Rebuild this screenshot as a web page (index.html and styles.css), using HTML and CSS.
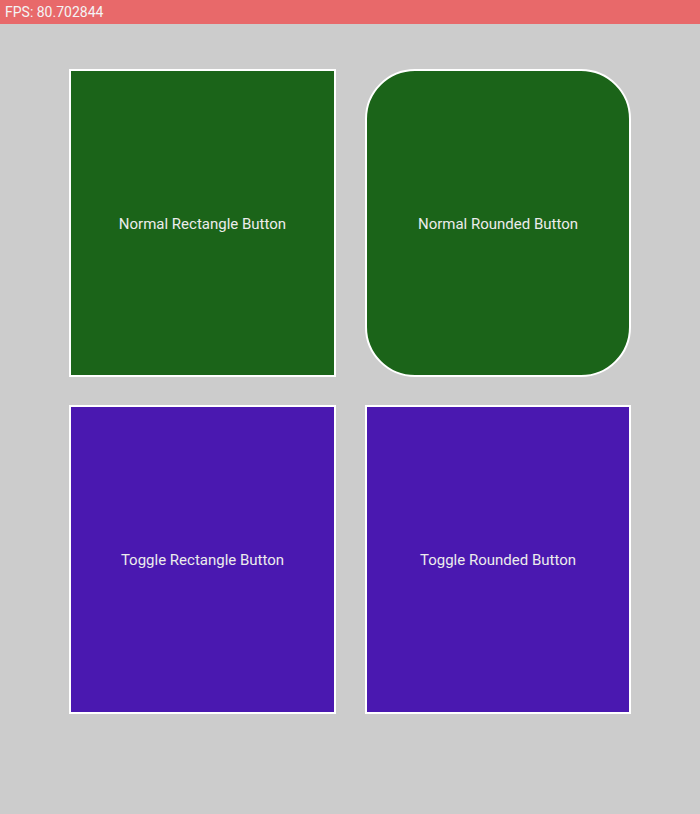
FILE: index.html
```html
<!DOCTYPE html>
<html>
<head>
<meta charset="utf-8">
<link rel="stylesheet" href="styles.css">
</head>
<body>
<div class="bar">FPS: 80.702844</div>
<div class="grid">
  <div class="btn normal">Normal Rectangle Button</div>
  <div class="btn normal rounded">Normal Rounded Button</div>
  <div class="btn toggle">Toggle Rectangle Button</div>
  <div class="btn toggle">Toggle Rounded Button</div>
</div>
</body>
</html>
```
FILE: styles.css
```css
html, body {
  margin: 0;
  padding: 0;
  background: #cccccc;
  width: 700px;
  height: 814px;
  overflow: hidden;
  font-family: Roboto, "Liberation Sans", sans-serif;
}
.bar {
  height: 24px;
  background: #e8696a;
  color: #f4f4f4;
  font-size: 14px;
  line-height: 24px;
  padding-left: 5px;
}
.grid {
  display: grid;
  grid-template-columns: 267px 266px;
  grid-template-rows: 308px 309px;
  column-gap: 29px;
  row-gap: 28px;
  padding: 45px 0 0 69px;
}
.btn {
  box-sizing: border-box;
  border: 2px solid #ffffff;
  display: flex;
  align-items: center;
  justify-content: center;
  color: #ececec;
  font-size: 15px;
  padding-top: 1px;
}
.normal {
  background: #1b6419;
}
.toggle {
  background: #4a18b0;
}
.rounded {
  border-radius: 50px;
}
```
